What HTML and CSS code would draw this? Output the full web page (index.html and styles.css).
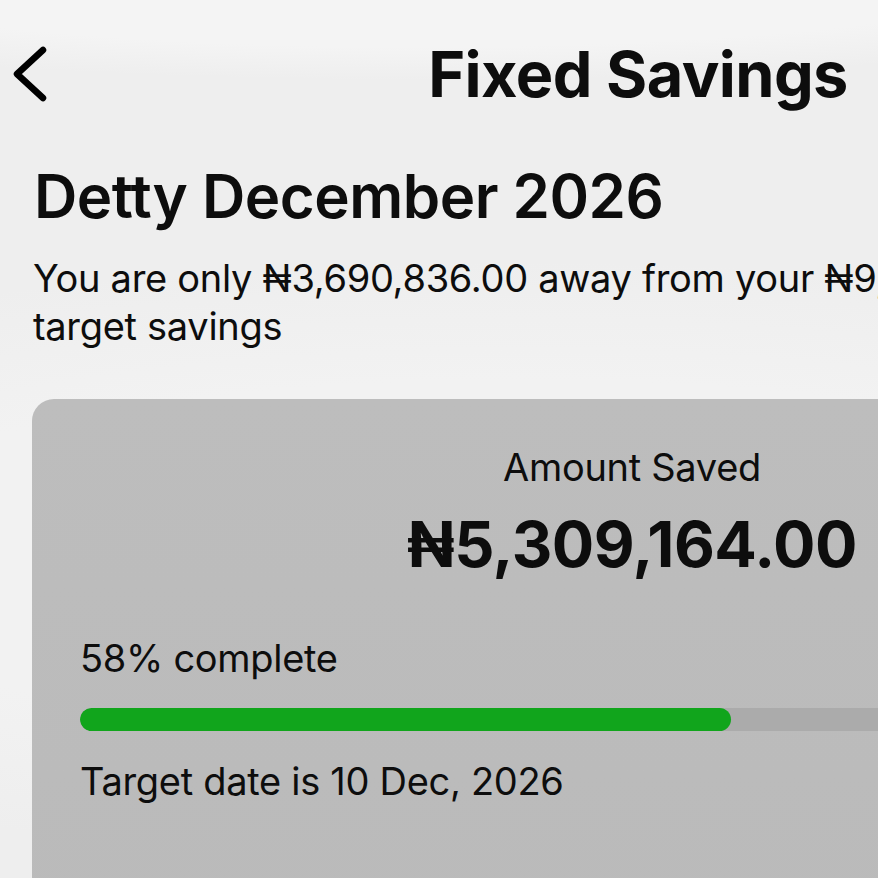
FILE: index.html
```html
<!doctype html>
<html lang="en">
  <head>
    <meta charset="UTF-8" />
    <meta name="viewport" content="width=device-width, initial-scale=1.0" />
    <title>Fixed Savings</title>
    <link rel="stylesheet" href="styles.css">
  </head>
  <body>
    <div class="screen">
      <div class="topbar">
        <a class="back" href="#" aria-label="Back">
          <svg width="40" height="56" viewBox="0 0 40 56">
            <path d="M31 4 L5 28 L31 52" fill="none" stroke="#000" stroke-width="6.5" stroke-linecap="round" stroke-linejoin="round" />
          </svg>
        </a>
        <h1>Fixed Savings</h1>
        <span></span>
      </div>

      <h2 class="plan-name">Detty December 2026</h2>
      <p class="lead">
        You are only ₦3,690,836.00 away from your ₦9,000,000.00<br />target savings
      </p>

      <div class="card">
        <div class="saved-label">Amount Saved</div>
        <div class="saved-amount">₦5,309,164.00</div>

        <div class="progress-label">58% complete</div>
        <div class="progress">
          <div class="progress-fill" style="width: 58%"></div>
        </div>
        <div class="target-date">Target date is 10 Dec, 2026</div>
      </div>
    </div>
  </body>
</html>
```

FILE: styles.css
```css
body {
  margin: 0;
  overflow: hidden;
  font-family: Inter, "Noto Sans", "DejaVu Sans", sans-serif;
  color: #0d0d0d;
  background-color: #efefef;
}
.screen {
  width: 1264px;
  min-height: 878px;
  background:
    radial-gradient(ellipse 900px 110px at 420px -30px, #f4f4f4 70%, rgba(244, 244, 244, 0) 100%),
    radial-gradient(ellipse 1200px 300px at 520px 560px, #f2f2f2 60%, rgba(242, 242, 242, 0) 100%),
    #eeeeee;
}
.topbar {
  display: grid;
  grid-template-columns: 1fr auto 1fr;
  align-items: center;
  padding: 39px 0 0 12px;
}
.back {
  display: flex;
  width: 40px;
}
.topbar h1 {
  margin: 0;
  font-size: 63px;
  font-weight: 700;
  letter-spacing: -0.6px;
  line-height: 70px;
}
.plan-name {
  margin: 52px 0 0 34px;
  font-size: 60px;
  font-weight: 600;
  letter-spacing: -0.5px;
  line-height: 70px;
}
.lead {
  margin: 23px 0 0 33px;
  font-size: 38px;
  font-weight: 400;
  line-height: 48px;
  letter-spacing: -0.3px;
  white-space: nowrap;
}
.card {
  margin: 49px 32px 0;
  min-height: 560px;
  border-radius: 22px;
  background: linear-gradient(180deg, #bdbdbd, #bababa);
  padding: 44px 48px 0;
  box-sizing: border-box;
}
.saved-label {
  text-align: center;
  font-size: 38px;
  font-weight: 400;
  line-height: 48px;
  letter-spacing: -0.3px;
}
.saved-amount {
  margin-top: 18px;
  text-align: center;
  font-size: 63px;
  font-weight: 700;
  line-height: 70px;
  letter-spacing: -0.5px;
}
.progress-label {
  margin-top: 57px;
  font-size: 38px;
  line-height: 44px;
  letter-spacing: -0.3px;
}
.progress {
  margin: 28px -19px 0 0;
  height: 23px;
  border-radius: 12px 0 0 12px;
  background-color: #ababab;
  overflow: hidden;
}
.progress-fill {
  height: 100%;
  border-radius: 12px;
  background-color: #11a51c;
}
.target-date {
  margin-top: 28px;
  font-size: 38px;
  line-height: 44px;
  letter-spacing: -0.3px;
}
```
